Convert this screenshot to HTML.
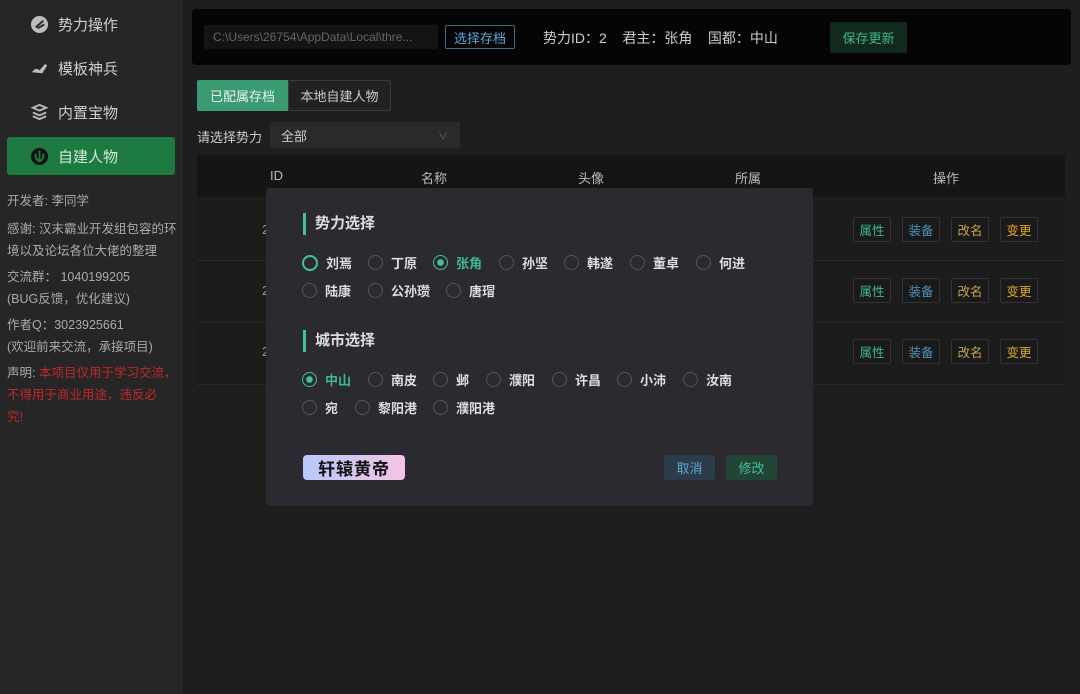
<!DOCTYPE html>
<html><head><meta charset="utf-8"><style>
*{box-sizing:border-box;margin:0;padding:0}
body{width:1080px;height:694px;background:#1e1e1f;font-family:"Liberation Sans","Noto Sans CJK SC",sans-serif;color:#cfcfcf;position:relative;overflow:hidden;font-size:13px}
.abs{position:absolute}
.side{left:0;top:0;width:183px;height:694px;background:#262626}
.nav{position:absolute;left:30px;font-size:15px;color:#cfcfcf;display:flex;align-items:center;gap:9px}
.nav svg{width:19px;height:19px}
.act{left:7px;top:137px;width:168px;height:38px;background:#1d7a40;border-radius:3px}
.info{left:7px;font-size:12.5px;color:#aaa;line-height:22px}
.red{color:#c0282a}
.bar{left:192px;top:9px;width:879px;height:56px;background:#050505;border-radius:4px}
.btn{position:absolute;display:flex;align-items:center;justify-content:center;border-radius:2px}
.ops span{position:absolute;width:38px;height:25px;border:1px solid #333;border-radius:2px;display:flex;align-items:center;justify-content:center;font-size:12.5px;background:#1a1a1a}
.modal{left:266px;top:188px;width:547px;height:318px;background:#2b2a30;border-radius:3px}
.ttl{position:absolute;left:37px;font-size:15px;font-weight:bold;color:#ddd;border-left:3px solid #3fc595;padding-left:9px;line-height:22px}
.r{position:absolute;display:flex;align-items:center;gap:8px;font-size:13px;color:#ddd;font-weight:bold}
.r i{width:15px;height:15px;border:1px solid #555;border-radius:50%;display:inline-block}
.r.on{color:#3fb88c}
.r.on i{border:1.5px solid #3fc595;background:radial-gradient(#3fc595 3px,transparent 3.5px)}
</style></head><body>
<div class="abs side"></div>
<div class="abs act"></div>
<div class="nav" style="top:14px"><svg viewBox="0 0 20 20"><circle cx="10" cy="10" r="9" fill="#bbb"/><path d="M6 13 L14 6 M8 14 L15 10" stroke="#262626" stroke-width="2"/></svg>势力操作</div>
<div class="nav" style="top:58px"><svg viewBox="0 0 20 20"><path d="M2 14 Q6 8 10 12 L16 5 L18 7 L13 15 Z" fill="#bbb"/></svg>模板神兵</div>
<div class="nav" style="top:102px"><svg viewBox="0 0 20 20"><path d="M3 5 L10 2 L17 5 L10 8Z M3 10 L10 13 L17 10 M3 14 L10 17 L17 14" fill="none" stroke="#bbb" stroke-width="2"/></svg>内置宝物</div>
<div class="nav" style="top:146px;color:#d6e8dc"><svg viewBox="0 0 20 20"><circle cx="10" cy="10" r="9" fill="#111"/><path d="M10 4 V16 M6 7 Q5 13 10 15 Q15 13 14 7" stroke="#1d7a40" stroke-width="2" fill="none"/></svg>自建人物</div>
<div class="abs info" style="top:190px">开发者: 李同学</div>
<div class="abs info" style="top:218px">感谢: 汉末霸业开发组包容的环<br>境以及论坛各位大佬的整理</div>
<div class="abs info" style="top:266px">交流群： 1040199205<br>(BUG反馈，优化建议)</div>
<div class="abs info" style="top:314px">作者Q：3023925661<br>(欢迎前来交流，承接项目)</div>
<div class="abs info" style="top:362px">声明: <span class="red">本项目仅用于学习交流，<br>不得用于商业用途，违反必<br>究!</span></div>

<div class="abs bar"></div>
<div class="btn" style="left:204px;top:25px;width:234px;height:24px;background:#141414;color:#666;font-size:12px;justify-content:flex-start;padding-left:9px">C:\Users\26754\AppData\Local\thre...</div>
<div class="btn" style="left:445px;top:25px;width:70px;height:24px;border:1px solid #3d6c85;color:#5aa6d4">选择存档</div>
<div class="abs" style="left:543px;top:28px;font-size:14px;color:#ccc">势力ID：2&nbsp;&nbsp;&nbsp;&nbsp;君主：张角&nbsp;&nbsp;&nbsp;&nbsp;国都：中山</div>
<div class="btn" style="left:830px;top:22px;width:77px;height:31px;background:#122a1e;color:#3fb88c">保存更新</div>

<div class="btn" style="left:197px;top:80px;width:91px;height:31px;background:#3a9a72;color:#e5f4ee;border-radius:2px 0 0 2px">已配属存档</div>
<div class="btn" style="left:288px;top:80px;width:103px;height:31px;border:1px solid #3a3a3a;color:#ccc;background:#222">本地自建人物</div>
<div class="abs" style="left:197px;top:127px;color:#ccc">请选择势力</div>
<div class="btn" style="left:270px;top:122px;width:190px;height:26px;background:#2a2a2a;color:#ccc;justify-content:flex-start;padding-left:11px">全部<span style="position:absolute;right:12px;color:#666;font-size:10px">∨</span></div>

<div class="abs" style="left:197px;top:155px;width:868px;height:42px;background:#151515"></div>
<div class="abs" style="left:197px;top:197px;width:868px;height:187px;background:#1c1c1c"></div>
<div class="abs" style="left:197px;top:260px;width:868px;height:1px;background:#2a2a2a"></div>
<div class="abs" style="left:197px;top:322px;width:868px;height:1px;background:#2a2a2a"></div>
<div class="abs" style="left:197px;top:384px;width:868px;height:1px;background:#2a2a2a"></div>
<div class="abs" style="top:168px;left:270px;color:#bbb">ID</div>
<div class="abs" style="top:168px;left:421px;color:#bbb">名称</div>
<div class="abs" style="top:168px;left:578px;color:#bbb">头像</div>
<div class="abs" style="top:168px;left:735px;color:#bbb">所属</div>
<div class="abs" style="top:168px;left:933px;color:#bbb">操作</div>
<div class="abs" style="top:222px;left:262px;color:#999">2</div>
<div class="abs" style="top:283px;left:262px;color:#999">2</div>
<div class="abs" style="top:344px;left:262px;color:#999">2</div>
<div class="ops">
<span style="left:853px;top:217px;color:#3fb88c">属性</span><span style="left:902px;top:217px;color:#4d8fbf">装备</span><span style="left:951px;top:217px;color:#c9a44a">改名</span><span style="left:1000px;top:217px;color:#e0a520">变更</span>
<span style="left:853px;top:278px;color:#3fb88c">属性</span><span style="left:902px;top:278px;color:#4d8fbf">装备</span><span style="left:951px;top:278px;color:#c9a44a">改名</span><span style="left:1000px;top:278px;color:#e0a520">变更</span>
<span style="left:853px;top:339px;color:#3fb88c">属性</span><span style="left:902px;top:339px;color:#4d8fbf">装备</span><span style="left:951px;top:339px;color:#c9a44a">改名</span><span style="left:1000px;top:339px;color:#e0a520">变更</span>
</div>

<div class="abs modal">
<div class="ttl" style="top:25px">势力选择</div>
<div class="r" style="left:36px;top:65px"><i style="border:2px solid #3fc595;width:16px;height:16px"></i>刘焉</div>
<div class="r" style="left:102px;top:65px"><i></i>丁原</div>
<div class="r on" style="left:167px;top:65px"><i></i>张角</div>
<div class="r" style="left:233px;top:65px"><i></i>孙坚</div>
<div class="r" style="left:298px;top:65px"><i></i>韩遂</div>
<div class="r" style="left:364px;top:65px"><i></i>董卓</div>
<div class="r" style="left:430px;top:65px"><i></i>何进</div>
<div class="r" style="left:36px;top:93px"><i></i>陆康</div>
<div class="r" style="left:102px;top:93px"><i></i>公孙瓒</div>
<div class="r" style="left:180px;top:93px"><i></i>唐瑁</div>
<div class="ttl" style="top:142px">城市选择</div>
<div class="r on" style="left:36px;top:182px"><i></i>中山</div>
<div class="r" style="left:102px;top:182px"><i></i>南皮</div>
<div class="r" style="left:167px;top:182px"><i></i>邺</div>
<div class="r" style="left:220px;top:182px"><i></i>濮阳</div>
<div class="r" style="left:286px;top:182px"><i></i>许昌</div>
<div class="r" style="left:351px;top:182px"><i></i>小沛</div>
<div class="r" style="left:417px;top:182px"><i></i>汝南</div>
<div class="r" style="left:36px;top:210px"><i></i>宛</div>
<div class="r" style="left:89px;top:210px"><i></i>黎阳港</div>
<div class="r" style="left:167px;top:210px"><i></i>濮阳港</div>
<div class="btn" style="left:37px;top:267px;width:102px;height:25px;background:linear-gradient(90deg,#b7c9fb,#f6c3e6);color:#111;font-size:17px;font-weight:bold;border-radius:4px;letter-spacing:1px">轩辕黄帝</div>
<div class="btn" style="left:398px;top:267px;width:51px;height:25px;background:#2c3c4a;color:#5aa6d4">取消</div>
<div class="btn" style="left:460px;top:267px;width:51px;height:25px;background:#234538;color:#3fc595">修改</div>
</div>
</body></html>
